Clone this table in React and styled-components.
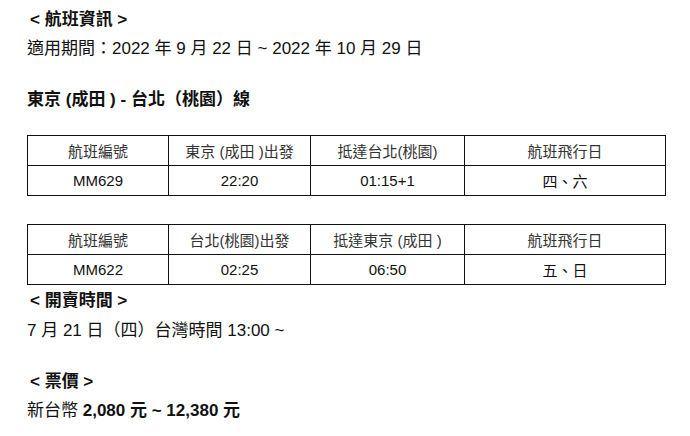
import React from "react";
import styled, { createGlobalStyle } from "styled-components";

const Global = createGlobalStyle`
  html, body { margin: 0; padding: 0; background: #fff; }
  body { font-family: "Liberation Sans", Arial, "Noto Sans CJK TC", sans-serif; color: #111; }
`;

const Page = styled.div`
  padding: 5px 26px 0 27px;
  width: 690px;
  box-sizing: border-box;
`;

const Line = styled.div`
  font-size: 17px;
  line-height: ${(p) => p.$lh || 29}px;
  height: ${(p) => p.$lh || 29}px;
  white-space: nowrap;
  font-weight: ${(p) => (p.$bold ? 700 : 400)};
  margin-top: ${(p) => p.$mt || 0}px;
  padding-left: ${(p) => p.$pl || 0}px;
`;

const B = styled.span`
  font-weight: 700;
`;

const Table = styled.table`
  border-collapse: collapse;
  width: 638px;
  margin-top: ${(p) => p.$mt || 0}px;
  table-layout: fixed;
  font-size: 15px;
`;

const Cell = styled.td`
  border: 1.5px solid #111;
  height: 29px;
  padding: 0;
  text-align: center;
  vertical-align: middle;
  color: ${(p) => (p.$head ? "#333" : "#111")};
`;

const cols = [141, 142, 154, 201];

function FlightTable({ mt, head, row }) {
  return (
    <Table $mt={mt}>
      <colgroup>
        {cols.map((w, i) => (
          <col key={i} style={{ width: w }} />
        ))}
      </colgroup>
      <tbody>
        <tr>
          {head.map((h, i) => (
            <Cell key={i} $head>
              {h}
            </Cell>
          ))}
        </tr>
        <tr>
          {row.map((h, i) => (
            <Cell key={i}>{h}</Cell>
          ))}
        </tr>
      </tbody>
    </Table>
  );
}

export default function App() {
  return (
    <Page>
      <Global />
      <Line $bold $pl={3}>&lt; 航班資訊 &gt;</Line>
      <Line>適用期間：2022 年 9 月 22 日 ~ 2022 年 10 月 29 日</Line>
      <Line $bold $mt={22}>東京 (成田 ) - 台北（桃園）線</Line>
      <FlightTable
        mt={21}
        head={["航班編號", "東京 (成田 )出發", "抵達台北(桃園)", "航班飛行日"]}
        row={["MM629", "22:20", "01:15+1", "四、六"]}
      />
      <FlightTable
        mt={28}
        head={["航班編號", "台北(桃園)出發", "抵達東京 (成田 )", "航班飛行日"]}
        row={["MM622", "02:25", "06:50", "五、日"]}
      />
      <Line $bold $pl={3} $mt={1} $lh={30}>&lt; 開賣時間 &gt;</Line>
      <Line $lh={30}>7 月 21 日（四）台灣時間 13:00 ~</Line>
      <Line $bold $pl={3} $mt={21}>&lt; 票價 &gt;</Line>
      <Line>
        新台幣 <B>2,080 元 ~ 12,380 元</B>
      </Line>
    </Page>
  );
}
